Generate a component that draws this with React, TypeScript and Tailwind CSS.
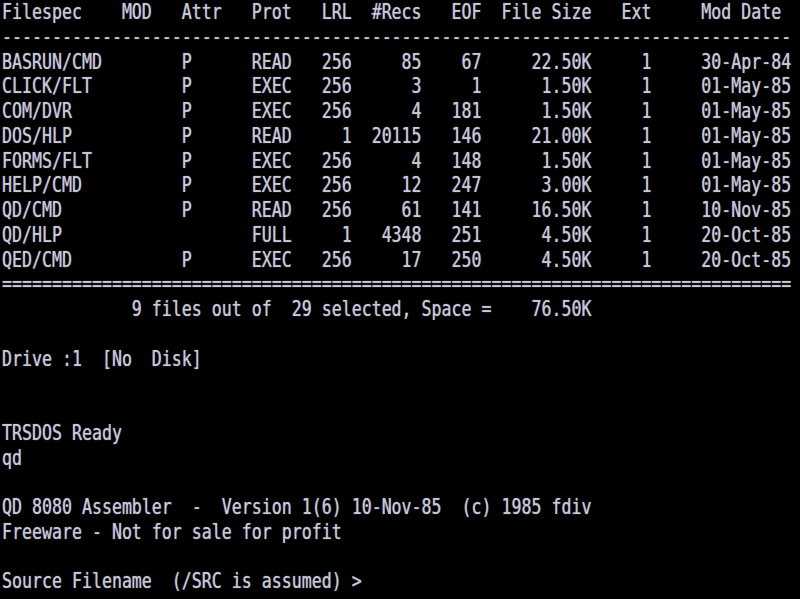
type Field = [number, string, "l" | "r"];

// place text on an 80-column line; "r" fields end at the given column
function line(fields: Field[]): string {
  const cells = Array(80).fill(" ");
  fields.forEach(([col, text, align]) => {
    const start = align === "r" ? col - text.length + 1 : col;
    text.split("").forEach((ch, i) => (cells[start + i] = ch));
  });
  return cells.join("").replace(/\s+$/, "");
}

const files = [
  ["BASRUN/CMD", "P", "READ", "256", "85", "67", "22.50K", "30-Apr-84"],
  ["CLICK/FLT", "P", "EXEC", "256", "3", "1", "1.50K", "01-May-85"],
  ["COM/DVR", "P", "EXEC", "256", "4", "181", "1.50K", "01-May-85"],
  ["DOS/HLP", "P", "READ", "1", "20115", "146", "21.00K", "01-May-85"],
  ["FORMS/FLT", "P", "EXEC", "256", "4", "148", "1.50K", "01-May-85"],
  ["HELP/CMD", "P", "EXEC", "256", "12", "247", "3.00K", "01-May-85"],
  ["QD/CMD", "P", "READ", "256", "61", "141", "16.50K", "10-Nov-85"],
  ["QD/HLP", "", "FULL", "1", "4348", "251", "4.50K", "20-Oct-85"],
  ["QED/CMD", "P", "EXEC", "256", "17", "250", "4.50K", "20-Oct-85"],
];

const screen: string[] = [
  line([
    [0, "Filespec", "l"],
    [12, "MOD", "l"],
    [18, "Attr", "l"],
    [25, "Prot", "l"],
    [32, "LRL", "l"],
    [37, "#Recs", "l"],
    [45, "EOF", "l"],
    [50, "File Size", "l"],
    [62, "Ext", "l"],
    [70, "Mod Date", "l"],
  ]),
  "-".repeat(79),
  ...files.map(([name, attr, prot, lrl, recs, eof, size, date]) =>
    line([
      [0, name, "l"],
      [18, attr, "l"],
      [25, prot, "l"],
      [34, lrl, "r"],
      [41, recs, "r"],
      [47, eof, "r"],
      [58, size, "r"],
      [64, "1", "l"],
      [70, date, "l"],
    ])
  ),
  "=".repeat(79),
  line([[13, "9 files out of  29 selected, Space =    76.50K", "l"]]),
  "",
  "Drive :1  [No  Disk]",
  "",
  "",
  "TRSDOS Ready",
  "qd",
  "",
  "QD 8080 Assembler  -  Version 1(6) 10-Nov-85  (c) 1985 fdiv",
  "Freeware - Not for sale for profit",
  "",
  "Source Filename  (/SRC is assumed) >",
];

export default function App() {
  return (
    <div className="w-[800px] h-[599px] overflow-hidden bg-black pl-[2px] pt-[1px] text-[#c8c8da] font-['DejaVu_Sans_Mono',monospace] text-[16.6px] [text-shadow:0_0_1px_#9a9ab4]">
      {screen.map((text, i) => (
        <div
          key={i}
          className="h-[24.75px] leading-[24.75px] whitespace-pre scale-y-[1.25]"
        >
          {text}
        </div>
      ))}
    </div>
  );
}
